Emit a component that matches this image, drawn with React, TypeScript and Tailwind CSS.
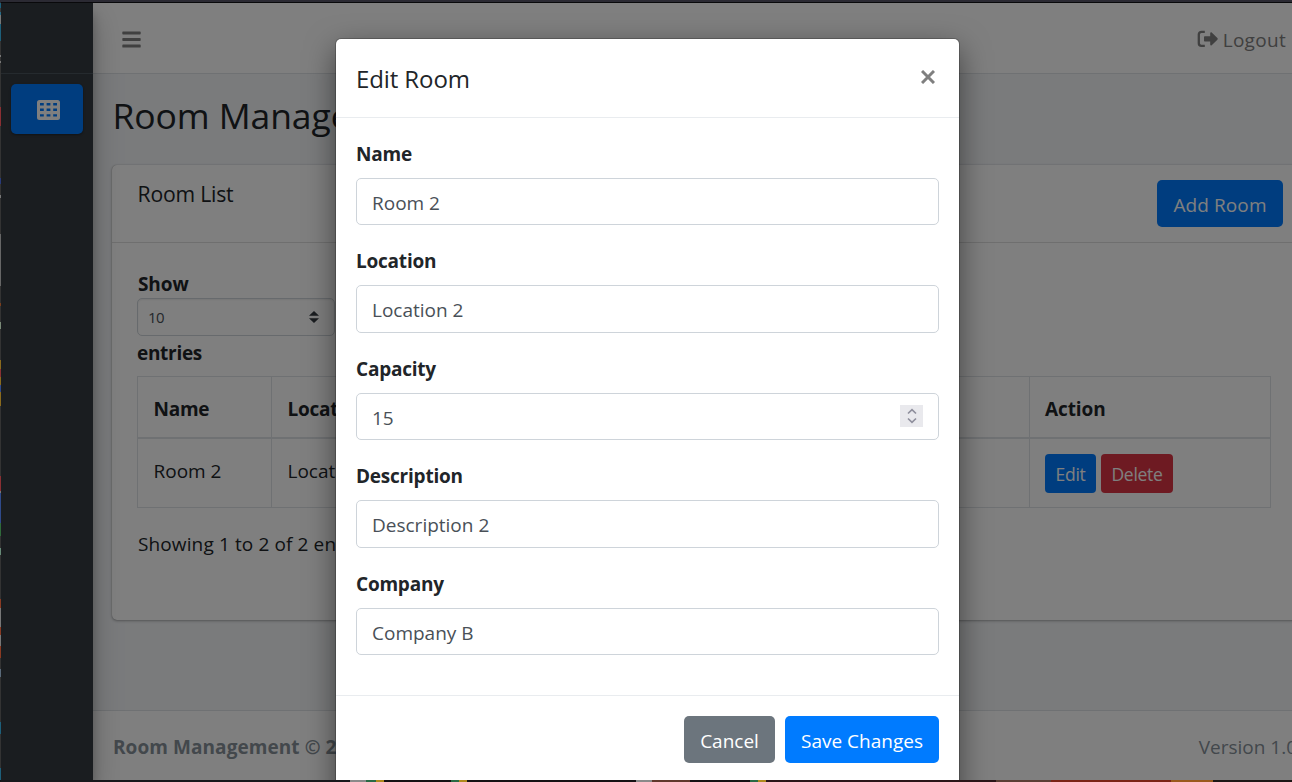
import React from "react";
import { FaBars } from "react-icons/fa";

const edge: [number, string][] = [
  [3, "#2b2a33"], [5, "#1d5f7a"], [4, "#3a3a3a"], [3, "#256a86"], [9, "#777777"], [17, "#1d5f7a"], [14, "#333333"],
  [2, "#777777"], [4, "#333333"], [2, "#777777"], [44, "#333333"], [19, "#8a2f33"], [52, "#333333"], [6, "#283a7a"],
  [11, "#333333"], [3, "#777777"], [36, "#333333"], [52, "#666666"], [17, "#333333"], [3, "#7a3e1d"], [16, "#333333"],
  [7, "#7a8a77"], [31, "#333333"], [9, "#8a6a1d"], [8, "#8a3033"], [8, "#8a6a1d"], [7, "#2f4a8a"], [14, "#8a6a1d"],
  [70, "#333333"], [15, "#8a2f33"], [2, "#777777"], [30, "#2f4a8a"], [13, "#2f6a3a"], [12, "#333333"], [7, "#668a77"],
  [44, "#333333"], [9, "#8a3a22"], [19, "#777777"], [8, "#8a3a22"], [11, "#777777"], [12, "#8a3a22"], [11, "#333333"],
  [8, "#5a6a7a"], [45, "#333333"], [12, "#1d5f7a"], [34, "#333333"], [12, "#1d5f7a"],
];

function GridIcon() {
  return (
    <svg className="h-5 w-[23px]" viewBox="0 0 23 20" fill="currentColor">
      <path
        fillRule="evenodd"
        d="M2.5 0h18A2.5 2.5 0 0 1 23 2.5v15a2.5 2.5 0 0 1-2.5 2.5h-18A2.5 2.5 0 0 1 0 17.5v-15A2.5 2.5 0 0 1 2.5 0ZM3 3v2.4h3.8V3Zm6.6 0v2.4h3.8V3Zm6.6 0v2.4H20V3ZM3 8.6V11h3.8V8.6Zm6.6 0V11h3.8V8.6Zm6.6 0V11H20V8.6ZM3 14.2v2.4h3.8v-2.4Zm6.6 0v2.4h3.8v-2.4Zm6.6 0v2.4H20v-2.4Z"
      />
    </svg>
  );
}

function LogoutIcon() {
  return (
    <svg className="mt-0.5 h-[18px] w-[21px]" viewBox="0 0 21 18">
      <path d="M7.8 1.9H4.4A2.6 2.6 0 0 0 1.8 4.5v8.8a2.6 2.6 0 0 0 2.6 2.6h3.4" fill="none" stroke="currentColor" strokeWidth="2.3" />
      <path
        d="M8 6.3h5.2V3.2c0-1 .9-1.3 1.5-.7l5.7 5.6c.5.5.5 1.1 0 1.6l-5.7 5.6c-.6.6-1.5.3-1.5-.7v-3.1H8c-.6 0-1-.4-1-1V7.3c0-.6.4-1 1-1Z"
        fill="currentColor"
      />
    </svg>
  );
}

function Field({ label, value, stepper }: { label: string; value: string; stepper?: boolean }) {
  return (
    <div className="mb-5">
      <label className="mb-2.5 block h-[30px] text-[19px] leading-[33px] font-bold tracking-[-0.22px]">{label}</label>
      <div className="flex h-[47.5px] items-center rounded-[5px] border border-[#ced4da] px-[15px]">
        <input
          className="h-full min-w-0 flex-1 bg-transparent pt-[3px] text-[19px] text-[#495057] outline-none"
          defaultValue={value}
        />
        {stepper && (
          <span className="mb-px flex h-[22px] w-[23px] items-center justify-center bg-[#e9e9ed] text-[#8f8f9d]">
            <svg className="h-4 w-3" viewBox="0 0 12 16" fill="none" stroke="currentColor" strokeWidth="1.7">
              <path d="M2 5.5 6 1.7l4 3.8M2 10.5l4 3.8 4-3.8" />
            </svg>
          </span>
        )}
      </div>
    </div>
  );
}

function Sidebar() {
  return (
    <aside className="relative z-10 w-[92px] shrink-0 bg-[#343a40] shadow-[0_14px_28px_rgba(0,0,0,0.25),0_10px_10px_rgba(0,0,0,0.22)]">
      <div className="h-[71px] border-b border-[#4b545c]" />
      <div className="mx-2.5 mt-2.5 flex h-[50px] items-center justify-center rounded-[5px] bg-[#007bff] pt-0.5 pl-[3px] text-white shadow-[0_1px_3px_rgba(0,0,0,0.12),0_1px_2px_rgba(0,0,0,0.24)]">
        <GridIcon />
      </div>
    </aside>
  );
}

function RoomCard() {
  return (
    <section className="ml-[19px] h-[455px] w-[1200px] rounded-[5px] bg-white shadow-[0_0_1px_rgba(0,0,0,0.3),0_1px_3px_rgba(0,0,0,0.3)]">
      <header className="flex h-[78px] items-start border-b border-[#dfdfdf] pl-[25.5px]">
        <h2 className="w-[97px] pt-[14px] text-[21.2px] leading-[30px] tracking-[-0.2px] whitespace-nowrap">Room List</h2>
        <button className="ml-[922.5px] mt-[15px] h-[47px] w-[126px] rounded-[5px] bg-[#007bff] pt-[3px] text-[19px] tracking-[0.1px] text-white">
          Add Room
        </button>
      </header>
      <div className="pt-[25px] pl-[25px] text-[19px]">
        <div className="h-[30px] pl-px leading-[32px] font-bold tracking-[-0.1px]">Show</div>
        <div className="flex h-[38px] w-[198px] items-center justify-between rounded-[5px] border border-[#ced4da] pr-[15px] pl-2.5 shadow-[inset_0_1px_2px_rgba(0,0,0,0.08)]">
          <span className="text-[15px] tracking-[-0.5px] text-[#495057]">10</span>
          <svg className="h-3 w-2.5" viewBox="0 0 10 12" fill="#343a40">
            <path d="M0 4.8 5 0l5 4.8ZM0 7.2 5 12l5-4.8Z" />
          </svg>
        </div>
        <div className="h-10 leading-[35px] font-bold tracking-[-0.3px]">entries</div>
        <div className="grid h-[132px] w-[1134px] grid-cols-[134px_758px_1fr] grid-rows-[62px_1fr] border-t border-l border-[#dee2e6] font-normal">
          <div className="border-r border-b-2 border-[#dee2e6] pl-[15.5px] leading-[65px] font-bold tracking-[-0.25px]">Name</div>
          <div className="border-r border-b-2 border-[#dee2e6] pl-[15.5px] leading-[65px] font-bold tracking-[-0.25px]">Location</div>
          <div className="border-r border-b-2 border-[#dee2e6] pl-[15px] leading-[65px] font-bold tracking-[-0.1px]">Action</div>
          <div className="border-r border-b border-[#dee2e6] pl-[15.5px] leading-[64px]">Room 2</div>
          <div className="border-r border-b border-[#dee2e6] pl-[15.5px] leading-[64px]">Location 2</div>
          <div className="flex gap-[5px] border-r border-b border-[#dee2e6] pt-[15px] pl-[15px] text-[17.5px] text-white">
            <button className="h-[39px] w-[51px] rounded-[4px] bg-[#007bff] pt-0.5 tracking-[-0.3px]">Edit</button>
            <button className="h-[39px] w-[72px] rounded-[4px] bg-[#dc3545] pt-0.5 tracking-[-0.3px]">Delete</button>
          </div>
        </div>
        <div className="mt-5 pl-px leading-[32px] tracking-[0.12px]">Showing 1 to 2 of 2 entries</div>
      </div>
    </section>
  );
}

function Modal() {
  return (
    <div role="dialog" className="mt-9 ml-[335px] flex h-[780px] w-[623px] flex-col rounded-[5px] bg-white shadow-[0_0_0_1px_rgba(0,0,0,0.2),0_10px_30px_rgba(0,0,0,0.5)]">
      <header className="flex h-[79px] shrink-0 items-start justify-between border-b border-[#e9ecef] px-5">
        <h1 className="pt-[21px] text-[24px] leading-[38px] tracking-[-0.1px]">Edit Room</h1>
        <button aria-label="Close" className="mt-[31px] mr-1 text-[#7f7f7f]">
          <svg className="h-3.5 w-3.5" viewBox="0 0 14 14" stroke="currentColor" strokeWidth="3">
            <path d="m1 1 12 12M13 1 1 13" />
          </svg>
        </button>
      </header>
      <div className="h-[577px] shrink-0 px-5 pt-[19.6px]">
        <Field label="Name" value="Room 2" />
        <Field label="Location" value="Location 2" />
        <Field label="Capacity" value="15" stepper />
        <Field label="Description" value="Description 2" />
        <Field label="Company" value="Company B" />
      </div>
      <footer className="flex shrink-0 justify-end gap-2.5 border-t border-[#e9ecef] px-5 pt-5 text-[19px] text-white">
        <button className="h-[47px] w-[91px] rounded-[5px] bg-[#6c757d] pt-[3px]">Cancel</button>
        <button className="h-[47px] w-[154px] rounded-[5px] bg-[#007bff] pt-[3px]">Save Changes</button>
      </footer>
    </div>
  );
}

export default function App() {
  return (
    <div className="flex h-[782px] w-[1292px] overflow-hidden bg-[#151518] font-['Open_Sans','Noto_Sans',sans-serif] text-[#212529]">
      <div className="flex w-px shrink-0 flex-col overflow-hidden">
        {edge.map(([height, color], i) => (
          <div key={i} className="w-px shrink-0" style={{ height, background: color }} />
        ))}
      </div>
      <div className="flex w-[1291px] flex-col">
        <div className="h-[3px] shrink-0 border-b border-[#09090b] bg-[#2b2a33]" />
        <div className="relative flex h-[777px] shrink-0 overflow-hidden">
          <Sidebar />
          <main className="flex w-[1199px] shrink-0 flex-col overflow-hidden bg-[#f4f6f9]">
            <nav className="flex h-[71px] shrink-0 items-center justify-between border-b border-[#dee2e6] bg-white pr-1.5 pl-[29px] text-[#808080]">
              <FaBars className="mt-0.5 h-[21px] w-[19px]" />
              <span className="flex items-center gap-[5px] text-[19px] tracking-[0.3px]">
                <LogoutIcon />
                <span className="pt-1">Logout</span>
              </span>
            </nav>
            <h1 className="h-[91px] shrink-0 pt-[16px] pl-[19.5px] text-[35.5px] leading-[50px] tracking-[-0.1px]">Room Management</h1>
            <RoomCard />
            <footer className="mt-[90px] flex h-[70px] shrink-0 justify-between border-t border-[#dee2e6] bg-white pl-5 text-[19px] leading-[73px] whitespace-nowrap text-[#869099]">
              <strong className="tracking-[0.07px]">Room Management © 2024</strong>
              <span className="-mr-[5px]">Version 1.0</span>
            </footer>
          </main>
          <div className="absolute inset-0 z-20 overflow-hidden bg-black/50">
            <Modal />
          </div>
        </div>
        <div className="flex h-0.5">
          <div className="w-[349px] bg-[#18181b]" />
          <div className="w-4 bg-[#8a8a8a]" />
          <div className="w-2.5 bg-[#2a6a45]" />
          <div className="w-2 bg-[#b08a1d]" />
          <div className="w-[67px] bg-[#151214]" />
          <div className="w-2 bg-[#2a6a45]" />
          <div className="w-2 bg-[#b08a1d]" />
          <div className="w-[169px] bg-[#151214]" />
          <div className="w-4 bg-[#8a8a8a]" />
          <div className="w-[38px] bg-[#60382c]" />
          <div className="w-[60px] bg-[#151214]" />
          <div className="w-2 bg-[#2a6a45]" />
          <div className="w-2 bg-[#b08a1d]" />
          <div className="w-[230px] bg-[#2a1518]" />
          <div className="w-[55px] bg-[#5a3f35]" />
          <div className="w-[120px] bg-[#7a2416]" />
          <div className="w-[42px] bg-[#9a5a1d]" />
          <div className="flex-1 bg-[#1c1715]" />
        </div>
      </div>
    </div>
  );
}
